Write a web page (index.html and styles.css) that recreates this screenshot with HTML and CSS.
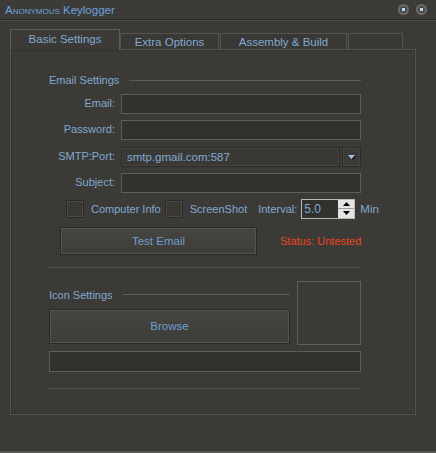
FILE: index.html
```html
<!DOCTYPE html>
<html lang="en">

<head>
    <meta charset="UTF-8">
    <meta name="viewport" content="width=device-width, initial-scale=1.0">
    <title>Anonymous Keylogger</title>
    <link rel="stylesheet" href="styles.css">
</head>

<body>
    <div class="window">
        <div class="titlebar">
            <span class="title">A<span class="caps">nonymous</span> Keylogger</span>
            <div class="ctrls">
                <span class="ctrl"></span>
                <span class="ctrl"></span>
            </div>
        </div>

        <div class="client">
            <div class="tabs">
                <div class="tab active">Basic Settings</div>
                <div class="tab t2">Extra Options</div>
                <div class="tab t3">Assembly &amp; Build</div>
                <div class="tab t4"></div>
            </div>

            <div class="panel">
                <!-- email -->
                <div class="group-head"><span>Email Settings</span><i></i></div>

                <div class="form">
                    <label>Email:</label>
                    <div class="field"></div>
                    <label>Password:</label>
                    <div class="field"></div>
                    <label>SMTP:Port:</label>
                    <div class="combo">
                        <div class="combo-text">smtp.gmail.com:587</div>
                        <div class="combo-btn">
                            <svg width="9" height="6" viewBox="0 0 9 6">
                                <path d="M2 2h7L5.5 6z" fill="#111" />
                                <path d="M1 1h7L4.5 5z" fill="#a9c9ea" />
                            </svg>
                        </div>
                    </div>
                    <label>Subject:</label>
                    <div class="field"></div>
                </div>

                <div class="options">
                    <span class="check"></span>
                    <span class="opt">Computer Info</span>
                    <span class="check"></span>
                    <span class="opt">ScreenShot</span>
                    <span class="interval">Interval:</span>
                    <div class="spin">
                        <span class="spin-val">5.0</span>
                        <div class="spin-btns">
                            <div class="spin-btn">
                                <svg width="7" height="4" viewBox="0 0 7 4"><path d="M3.5 0L7 4H0z" fill="#000" /></svg>
                            </div>
                            <div class="spin-btn">
                                <svg width="7" height="4" viewBox="0 0 7 4"><path d="M0 0h7L3.5 4z" fill="#000" /></svg>
                            </div>
                        </div>
                    </div>
                    <span class="min">Min</span>
                </div>

                <div class="test-row">
                    <div class="btn test">Test Email</div>
                    <span class="status">Status: Untested</span>
                </div>

                <div class="sep"></div>

                <!-- icon -->
                <div class="icon-grid">
                    <div class="icon-left">
                        <div class="group-head"><span>Icon Settings</span><i></i></div>
                        <div class="btn browse">Browse</div>
                    </div>
                    <div class="icon-box"></div>
                </div>

                <div class="field path"></div>

                <div class="sep last"></div>
            </div>
        </div>
    </div>
</body>

</html>
```

FILE: styles.css
```css
body {
    margin: 0;
    background-color: #3c3a37;
    font-family: "Liberation Sans", Arial, sans-serif;
    font-size: 11px;
    color: #80a9d0;
}

.window {
    width: 436px;
    height: 453px;
    box-sizing: border-box;
    border-bottom: 2px solid #5a5855;
    background-color: #3c3a37;
    overflow: hidden;
}

/* title bar */

.titlebar {
    height: 19px;
    display: flex;
    align-items: center;
    justify-content: space-between;
    padding: 0 5px;
    border-bottom: 1px solid #2a2927;
    box-shadow: 0 1px 0 #4b4946;
    background-color: #3d3b38;
}

.title {
    color: #6aa2dc;
    font-size: 11.5px;
    padding-top: 1px;
}

.caps {
    text-transform: uppercase;
    font-size: 8px;
}

.ctrls {
    display: flex;
    gap: 7px;
    padding-right: 4px;
}

.ctrl {
    width: 7px;
    height: 7px;
    border-radius: 50%;
    border: 2px solid #6c6b6a;
    background: radial-gradient(circle, #b8d8ee 0 1.5px, #4a4947 2px);
}

/* tabs */

.client {
    padding: 9px 0 0 10px;
}

.tabs {
    display: flex;
    align-items: flex-end;
    height: 20px;
    position: relative;
    z-index: 1;
}

.tab {
    box-sizing: border-box;
    height: 16px;
    border: 1px solid #56544f;
    border-bottom: none;
    background-color: #3a3835;
    text-align: center;
    line-height: 17px;
    font-size: 11.5px;
    margin-right: 1px;
}

.tab.active {
    width: 110px;
    height: 21px;
    margin-bottom: -1px;
    background-color: #3c3a37;
    border-color: #5e5c58;
    line-height: 18px;
    margin-right: 0;
}

.t2 { width: 99px; }
.t3 { width: 127px; }
.t4 { width: 55px; }

.panel {
    box-sizing: border-box;
    width: 406px;
    height: 366px;
    border: 1px solid #55534f;
    box-shadow: inset 0 0 0 1px #33312e;
    padding: 23px 0 0 38px;
}

.group-head {
    display: flex;
    align-items: center;
    width: 312px;
    height: 14px;
}

.group-head i {
    flex: 1;
    height: 1px;
    margin-left: 10px;
    background-color: #5e5c59;
}

/* email form */

.form {
    display: grid;
    grid-template-columns: 66px 240px;
    column-gap: 6px;
    grid-auto-rows: 20px;
    row-gap: 6.4px;
    margin-top: 7px;
}

.form label {
    text-align: right;
    line-height: 18px;
}

.field {
    box-sizing: border-box;
    height: 20px;
    border: 1px solid #5f5d5a;
    background-color: #33312e;
}

.combo {
    display: flex;
    gap: 2px;
}

.combo-text {
    flex: 1;
    box-sizing: border-box;
    border: 1px solid #2d2c2a;
    box-shadow: inset 0 0 0 1px #45433f;
    background-color: #3b3936;
    padding-left: 5px;
    line-height: 18px;
    font-size: 11.5px;
}

.combo-btn {
    width: 19px;
    box-sizing: border-box;
    border: 1px solid #2d2c2a;
    box-shadow: inset 0 0 0 1px #45433f;
    display: flex;
    align-items: center;
    justify-content: center;
}

/* options */

.options {
    display: flex;
    align-items: center;
    height: 20px;
    margin-top: 5.5px;
    padding-left: 17px;
}

.check {
    box-sizing: border-box;
    width: 18px;
    height: 18px;
    border: 1px solid #2b2a28;
    box-shadow: inset 0 0 0 1px #4b4946;
    background-color: #3a3835;
}

.opt {
    margin: 0 4px 0 7px;
}

.interval {
    margin-left: 7px;
}

.spin {
    display: flex;
    box-sizing: border-box;
    width: 54px;
    height: 20px;
    margin-left: 4px;
    border: 1px solid #b8b8b8;
    background-color: #33312e;
}

.spin-val {
    flex: 1;
    font-size: 12px;
    line-height: 18px;
    padding-left: 2px;
}

.spin-btns {
    display: flex;
    flex-direction: column;
    gap: 1px;
    width: 16px;
    background-color: #9c9c9c;
}

.spin-btn {
    flex: 1;
    background-color: #e4e4e4;
    display: flex;
    align-items: center;
    justify-content: center;
}

.min {
    margin-left: 5px;
    font-size: 11.5px;
}

/* buttons */

.test-row {
    display: flex;
    align-items: center;
    margin-top: 8px;
    padding-left: 11px;
}

.btn {
    box-sizing: border-box;
    display: flex;
    align-items: center;
    justify-content: center;
    border: 1px solid #2b2a28;
    box-shadow: inset 0 0 0 1px #55534f;
    background: linear-gradient(#474542, #3f3d3a);
    color: #6d9fcf;
    font-size: 11.5px;
}

.test {
    width: 197px;
    height: 28px;
}

.status {
    margin-left: 23px;
    color: #e8471f;
    font-size: 11px;
}

.sep {
    width: 312px;
    height: 1px;
    margin-top: 12px;
    background-color: #575551;
}

.sep.last {
    margin-top: 16px;
}

/* icon */

.icon-grid {
    display: grid;
    grid-template-columns: 241px 64px;
    column-gap: 7px;
    margin-top: 13px;
}

.icon-left {
    padding-top: 7px;
}

.icon-left .group-head {
    width: 241px;
}

.browse {
    height: 35px;
    margin-top: 7px;
}

.icon-box {
    box-sizing: border-box;
    height: 64px;
    border: 1px solid #5f5d5a;
}

.field.path {
    width: 312px;
    height: 21px;
    margin-top: 6px;
}
```
